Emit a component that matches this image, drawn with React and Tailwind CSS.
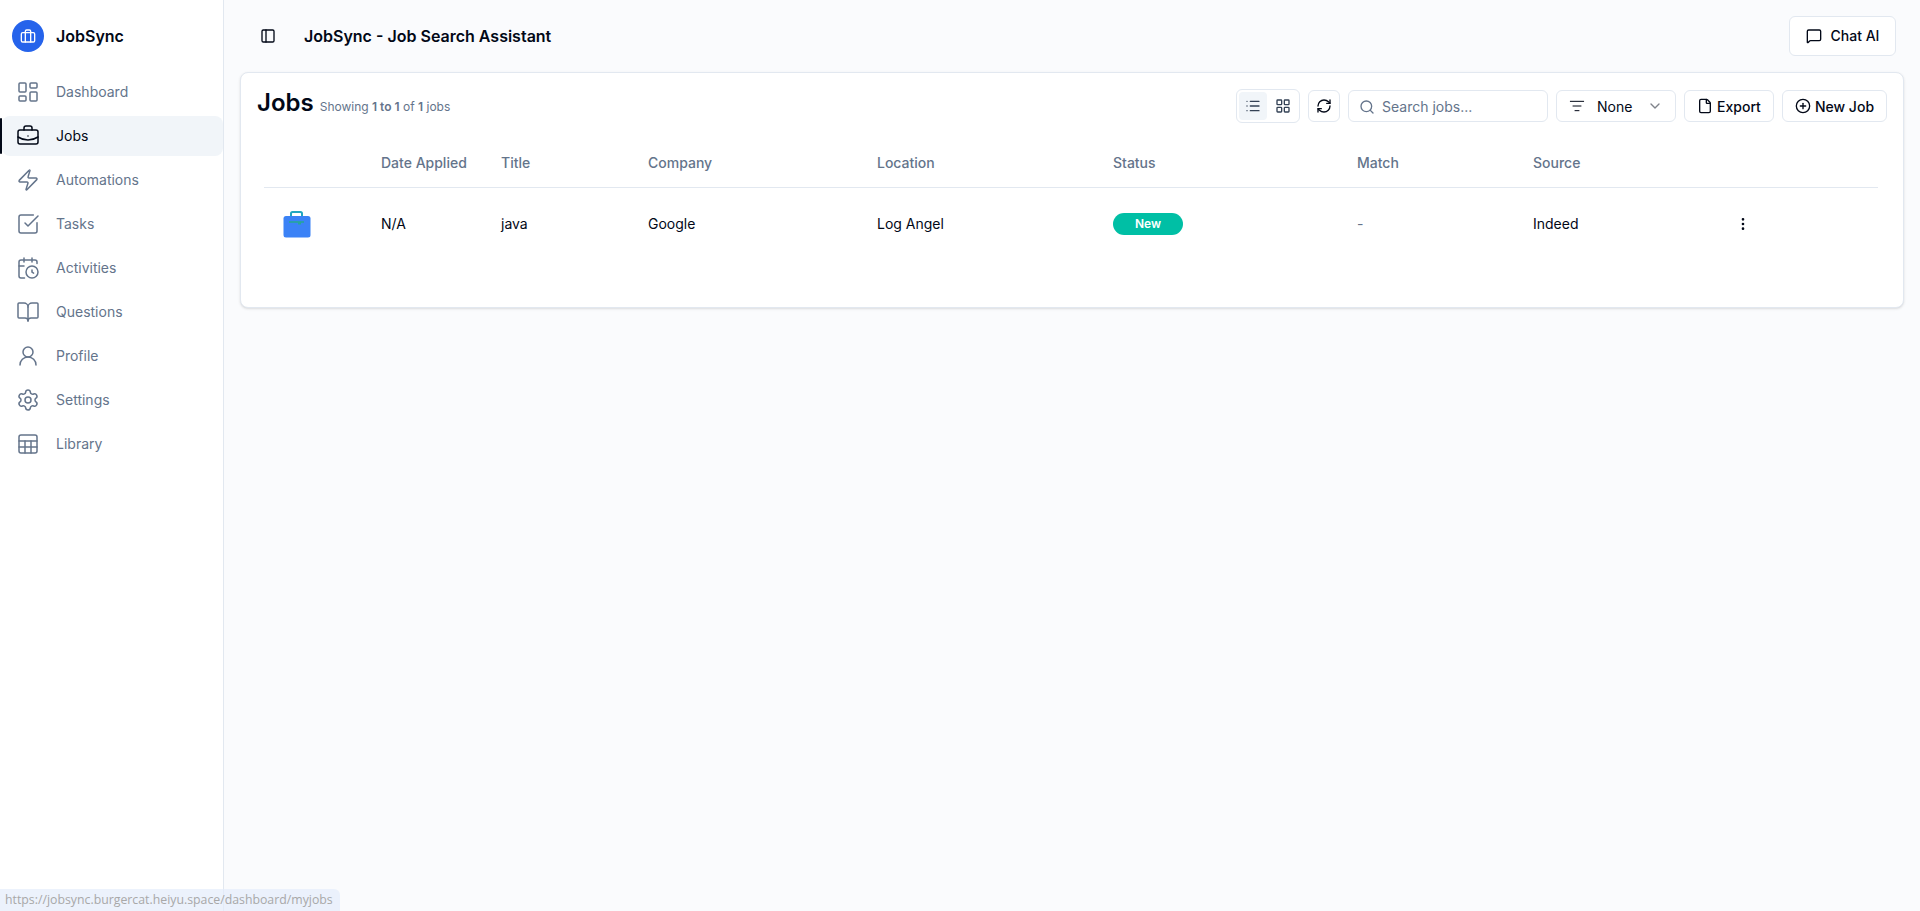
import React from "react";
import {
  LayoutDashboard, BriefcaseBusiness, Zap, SquareCheckBig, CalendarClock, BookOpen, UserRound,
  Settings, Sheet, PanelLeft, MessageSquare, List, LayoutGrid, RefreshCw, Search, ListFilter,
  ChevronDown, File, CirclePlus, EllipsisVertical,
} from "lucide-react";

const nav = [
  ["Dashboard", LayoutDashboard],
  ["Jobs", BriefcaseBusiness, true],
  ["Automations", Zap],
  ["Tasks", SquareCheckBig],
  ["Activities", CalendarClock],
  ["Questions", BookOpen],
  ["Profile", UserRound],
  ["Settings", Settings],
  ["Library", Sheet],
];

const cols = "grid grid-cols-[117px_120px_147px_229px_236px_244px_176px_196px_1fr]";
const headers = ["", "Date Applied", "Title", "Company", "Location", "Status", "Match", "Source", ""];

function NavItem({ label, Icon, active }) {
  return (
    <div className="relative h-11 flex items-center">
      {active && <div className="absolute left-0 top-[4px] h-[36px] w-[2px] rounded-full bg-[#020817]" />}
      <div className={`flex h-10 w-full items-center rounded-lg pl-[16px] ml-[2px] ${active ? "bg-[#f1f5f9] text-[#020817]" : "text-[#64748b]"}`}>
        <Icon className="-ml-[2px] h-6 w-6 shrink-0" strokeWidth={1.5} />
        <span className="ml-[16px] text-sm">{label}</span>
      </div>
    </div>
  );
}

function BtnOutline({ className = "", children }) {
  return (
    <div className={`flex h-8 items-center justify-center gap-1 rounded-md border border-[#e2e8f0] bg-white text-sm font-medium text-[#020817] ${className}`}>
      {children}
    </div>
  );
}

function JobIcon() {
  return (
    <svg width="28" height="28" viewBox="0 0 28 28" fill="none">
      <path d="M8 6.5V3.5A1.5 1.5 0 0 1 9.5 2h8A1.5 1.5 0 0 1 19 3.5V6.5" stroke="#22a7c0" strokeWidth="2" />
      <rect x="0.5" y="6" width="27" height="21.5" rx="2.5" fill="#3b82f6" />
      <path d="M6 12h15" stroke="#26a69a" strokeWidth="1.6" />
      <rect x="15" y="12" width="3" height="2.5" fill="#26a69a" />
    </svg>
  );
}

export default function App() {
  return (
    <div className="relative flex h-[911px] w-full overflow-hidden bg-[#fafbfd] text-[#020817] font-['Inter',sans-serif]">
      <aside className="w-[224px] shrink-0 border-r border-[#e2e8f0] bg-white">
        <div className="flex h-[70px] items-center pl-[12px] pt-[2px]">
          <div className="flex h-8 w-8 items-center justify-center rounded-full bg-[#2563eb] text-white">
            <svg width="16" height="16" viewBox="0 0 24 24" fill="none" stroke="currentColor" strokeWidth="2" strokeLinecap="round" strokeLinejoin="round">
              <rect x="2" y="7" width="20" height="14" rx="2" />
              <path d="M16 21V5a2 2 0 0 0-2-2h-4a2 2 0 0 0-2 2v16" />
            </svg>
          </div>
          <span className="ml-[12px] text-base font-semibold">JobSync</span>
        </div>
        <nav>
          {nav.map(([label, Icon, active]) => (
            <NavItem key={label} label={label} Icon={Icon} active={active} />
          ))}
        </nav>
      </aside>

      <main className="flex min-w-0 flex-1 flex-col">
        <header className="flex h-[72px] items-center pl-[36px] pr-[24px]">
          <PanelLeft className="h-4 w-4 text-[#020817]" />
          <h1 className="ml-[28px] text-base font-semibold">JobSync - Job Search Assistant</h1>
          <div className="ml-auto flex h-10 w-[107px] items-center justify-center gap-[9px] rounded-md border border-[#e2e8f0] bg-white text-sm font-medium">
            <MessageSquare className="h-4 w-4" />
            Chat AI
          </div>
        </header>

        <section className="mx-[16px] h-[236px] rounded-lg border border-[#e2e8f0] bg-white shadow-sm">
          <div className="flex h-[66px] items-center px-[16px]">
            <h2 className="mb-[6px] text-2xl font-semibold leading-none">Jobs</h2>
            <p className="ml-[6px] mt-[1px] text-xs text-[#64748b]">
              Showing <strong className="font-semibold">1 to 1</strong> of <strong className="font-semibold">1</strong> jobs
            </p>
            <div className="ml-auto flex items-center gap-2">
              <div className="flex h-[34px] w-[64px] items-center gap-[2px] rounded-md border border-[#e2e8f0] p-[2px]">
                <div className="flex h-7 w-7 items-center justify-center rounded bg-[#f1f5f9]"><List className="h-4 w-4 text-[#334155]" /></div>
                <div className="flex h-7 w-7 items-center justify-center rounded"><LayoutGrid className="h-4 w-4 text-[#334155]" /></div>
              </div>
              <BtnOutline className="w-8"><RefreshCw className="h-4 w-4" /></BtnOutline>
              <div className="flex h-8 w-[200px] items-center rounded-md border border-[#e2e8f0] bg-white pl-[10px]">
                <Search className="mt-[2px] h-4 w-4 text-[#64748b]" />
                <span className="ml-[7px] mt-[1px] text-sm text-[#64748b]">Search jobs...</span>
              </div>
              <div className="flex h-8 w-[120px] items-center rounded-md border border-[#e2e8f0] bg-white pl-[12px] pr-[12px] text-sm">
                <ListFilter className="h-4 w-4" strokeWidth={1.5} />
                <span className="ml-[12px] mt-[1px]">None</span>
                <ChevronDown className="ml-auto h-4 w-4 opacity-50" />
              </div>
              <BtnOutline className="w-[90px]"><File className="h-4 w-4" /><span className="mt-[1px]">Export</span></BtnOutline>
              <BtnOutline className="w-[105px]"><CirclePlus className="h-4 w-4" /><span className="mt-[1px]">New Job</span></BtnOutline>
            </div>
          </div>

          <div className="ml-[23px] mr-[25px]">
            <div className={`${cols} h-[49px] items-center border-b border-[#e2e8f0] text-sm font-medium text-[#64748b]`}>
              {headers.map((h, i) => <div key={i}>{h}</div>)}
            </div>
            <div className={`${cols} h-[72px] items-center text-sm`}>
              <div className="flex pl-[19px]"><JobIcon /></div>
              <div>N/A</div>
              <div>java</div>
              <div>Google</div>
              <div>Log Angel</div>
              <div>
                <span className="flex h-[22px] w-[70px] items-center justify-center rounded-full bg-[#00bfa5] text-xs font-semibold text-white">New</span>
              </div>
              <div className="text-[#64748b]">-</div>
              <div>Indeed</div>
              <div className="flex"><div className="flex w-[28px] justify-center"><EllipsisVertical className="h-4 w-4" /></div></div>
            </div>
          </div>
        </section>
      </main>

      <div className="absolute bottom-0 left-0 flex h-[22px] w-[340px] items-center rounded-tr-md bg-[#e4edfb]/70 pl-[5px] font-['Open_Sans',sans-serif] text-[12.3px] text-[#a8a8a8]">
        https://jobsync.burgercat.heiyu.space/dashboard/myjobs
      </div>
    </div>
  );
}
